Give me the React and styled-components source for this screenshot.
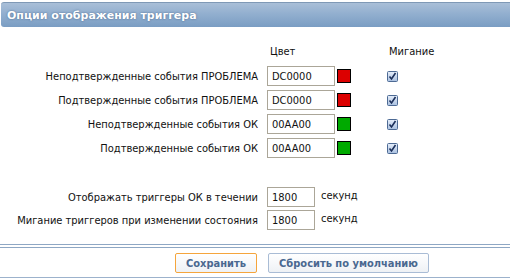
import React from "react";
import styled, { createGlobalStyle } from "styled-components";

const Global = createGlobalStyle`
  html, body { margin: 0; padding: 0; background: #fff; }
  body { font-family: "DejaVu Sans Condensed", "DejaVu Sans", Verdana, sans-serif; font-size: 11px; color: #111; }
`;

const Page = styled.div`
  width: 510px;
  height: 279px;
  overflow: hidden;
  padding-top: 2px;
  box-sizing: border-box;
`;

const Header = styled.div`
  margin-left: 1px;
  height: 25px;
  box-sizing: border-box;
  border-top: 1px solid #7f99b6;
  border-radius: 3px 0 0 3px;
  background: linear-gradient(#a9bfd8, #92afcf 45%, #7a9dc3);
  display: flex;
  align-items: center;
  padding-left: 6px;
  color: #fff;
  font-family: "DejaVu Sans", Verdana, sans-serif;
  font-weight: bold;
  font-size: 11px;
  text-shadow: 0 0 2px rgba(40, 70, 110, 0.7);
`;

const Form = styled.div`
  display: flex;
  flex-direction: column;
  margin-top: 17px;
`;

const Row = styled.div`
  display: flex;
  align-items: center;
  height: ${(p) => p.$h || 20}px;
  margin-top: ${(p) => p.$mt || 0}px;
`;

const Label = styled.div`
  width: 267px;
  flex: none;
  text-align: right;
  padding-right: 9px;
  box-sizing: border-box;
  white-space: nowrap;
`;

const ColHead = styled.div`
  width: ${(p) => p.$w}px;
  padding-left: ${(p) => p.$pl || 0}px;
  box-sizing: border-box;
`;

const Input = styled.div`
  width: ${(p) => p.$w}px;
  flex: none;
  height: 20px;
  box-sizing: border-box;
  border: 1px solid #aba698;
  padding-left: 4px;
  display: flex;
  align-items: center;
  background: #fff;
`;

const Swatch = styled.div`
  width: 14px;
  height: 14px;
  box-sizing: border-box;
  margin-left: 2px;
  border: 1px solid #000;
  background: ${(p) => p.$c};
`;

const CheckWrap = styled.div`
  margin-left: 36px;
  width: 11px;
  height: 11px;
  display: flex;
`;

const Unit = styled.div`
  margin-left: 6px;
  margin-top: -3px;
`;

const Separator = styled.div`
  margin-top: 14px;
  height: 2px;
  border-top: 1px solid #8ea7c4;
  border-bottom: 1px solid #8ea7c4;
`;

const Footer = styled.div`
  display: flex;
  gap: 11px;
  padding-left: 175px;
  padding-top: 5px;
  height: 30px;
  box-sizing: border-box;
  border-bottom: 1px solid #9cb2cc;
`;

const Button = styled.div`
  width: ${(p) => p.$w}px;
  height: 20px;
  box-sizing: border-box;
  border: 1px solid ${(p) => (p.$primary ? "#f5a53c" : "#a9bcd5")};
  border-radius: 2px;
  background: linear-gradient(#ffffff, #eef1f5);
  color: #4a6890;
  font-family: "DejaVu Sans Condensed", "DejaVu Sans", sans-serif;
  font-weight: bold;
  font-size: 11px;
  white-space: nowrap;
  display: flex;
  align-items: center;
  justify-content: center;
`;

const Check = () => (
  <svg width="11" height="11" viewBox="0 0 11 11">
    <defs>
      <linearGradient id="cbg" x1="0" y1="0" x2="0" y2="1">
        <stop offset="0" stopColor="#e6eefa" />
        <stop offset="1" stopColor="#a9c0e0" />
      </linearGradient>
    </defs>
    <rect x="0.5" y="0.5" width="10" height="10" rx="1" fill="url(#cbg)" stroke="#4d6a94" />
    <path d="M2.5 5.5 L4.5 8 L8.5 2" fill="none" stroke="#1b2f5a" strokeWidth="1.6" />
  </svg>
);

const rows = [
  ["Неподтвержденные события ПРОБЛЕМА", "DC0000", "#dc0000"],
  ["Подтвержденные события ПРОБЛЕМА", "DC0000", "#dc0000"],
  ["Неподтвержденные события ОК", "00AA00", "#00aa00"],
  ["Подтвержденные события ОК", "00AA00", "#00aa00"],
];

export default function App() {
  return (
    <Page>
      <Global />
      <Header>Опции отображения триггера</Header>
      <Form>
        <Row $h={14}>
          <Label />
          <ColHead $w={122} $pl={3}>Цвет</ColHead>
          <ColHead $w={80}>Мигание</ColHead>
        </Row>
        {rows.map(([label, code, color], i) => (
          <Row key={i} $mt={i === 0 ? 8 : 4}>
            <Label>{label}</Label>
            <Input $w={68}>{code}</Input>
            <Swatch $c={color} />
            <CheckWrap>
              <Check />
            </CheckWrap>
          </Row>
        ))}
        <Row $mt={29}>
          <Label>Отображать триггеры ОК в течении</Label>
          <Input $w={48}>1800</Input>
          <Unit>секунд</Unit>
        </Row>
        <Row $mt={3}>
          <Label>Мигание триггеров при изменении состояния</Label>
          <Input $w={48}>1800</Input>
          <Unit>секунд</Unit>
        </Row>
      </Form>
      <Separator />
      <Footer>
        <Button $primary $w={82}>Сохранить</Button>
        <Button $w={161}>Сбросить по умолчанию</Button>
      </Footer>
    </Page>
  );
}
